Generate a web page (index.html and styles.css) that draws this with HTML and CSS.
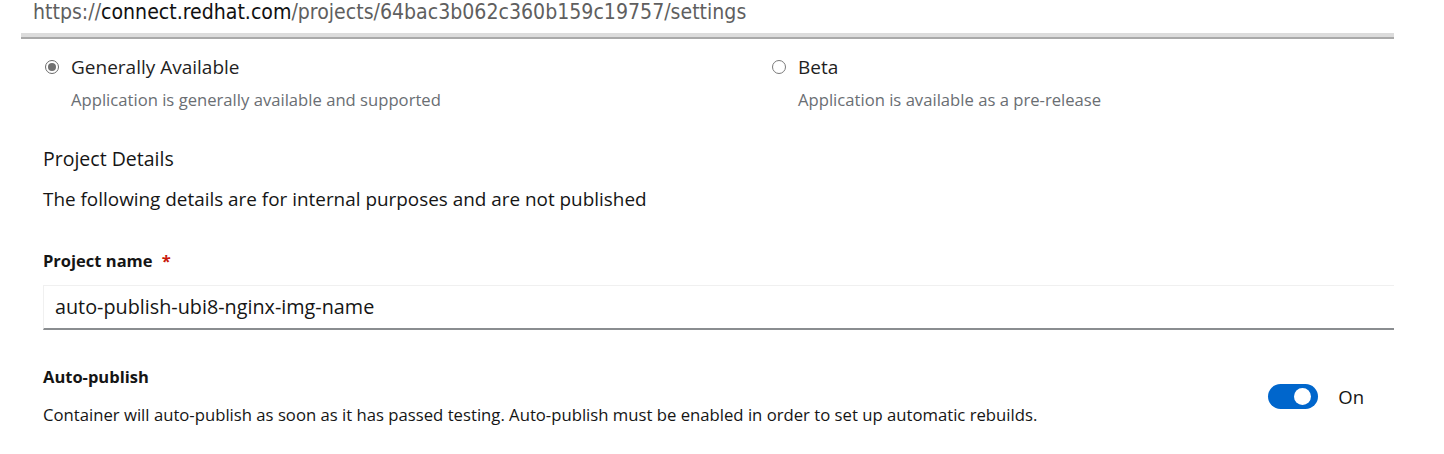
FILE: index.html
```html
<!DOCTYPE html>
<html>
<head>
<meta charset="utf-8">
<link rel="stylesheet" href="styles.css">
</head>
<body>
<div class="urlbar"><span class="dim">https://</span><span class="host">connect.redhat.com</span><span class="dim">/projects/64bac3b062c360b159c19757/settings</span></div>
<div class="sep"></div>
<main class="content">
  <div class="radios">
    <div class="radio-item">
      <div class="radio-row"><span class="radio checked"></span><span class="radio-label">Generally Available</span></div>
      <div class="radio-desc">Application is generally available and supported</div>
    </div>
    <div class="radio-item">
      <div class="radio-row"><span class="radio"></span><span class="radio-label">Beta</span></div>
      <div class="radio-desc">Application is available as a pre-release</div>
    </div>
  </div>
  <h2 class="section-title">Project Details</h2>
  <p class="section-intro">The following details are for internal purposes and are not published</p>
  <div class="field">
    <label class="field-label">Project name <span class="req">*</span></label>
    <div class="input">auto-publish-ubi8-nginx-img-name</div>
  </div>
  <div class="switch-row">
    <div class="switch-text">
      <div class="field-label">Auto-publish</div>
      <div class="switch-desc">Container will auto-publish as soon as it has passed testing. Auto-publish must be enabled in order to set up automatic rebuilds.</div>
    </div>
    <div class="switch">
      <span class="toggle"><span class="knob"></span></span>
      <span class="toggle-label">On</span>
    </div>
  </div>
</main>
</body>
</html>
```
FILE: styles.css
```css
html, body { margin: 0; padding: 0; background: #fff; }
body { font-family: "Open Sans", "Noto Sans", sans-serif; color: #151515; width: 1444px; height: 454px; overflow: hidden; }

.urlbar {
  font-family: "Liberation Sans Narrow", "DejaVu Sans Condensed", "Liberation Sans", sans-serif;
  font-stretch: condensed;
  font-size: 21.1px;
  line-height: 24px;
  padding-left: 33px;
  height: 25px;
  color: #5f5f5f;
}
.urlbar .host { color: #111; }

.sep {
  margin: 8px 0 0 21px;
  width: 1373px;
  height: 4px;
  background: #dcdcdc;
  border-bottom: 2px solid #a9a9a9;
}

.content { padding: 0 50px 0 43px; width: 1351px; box-sizing: content-box; }

.radios { display: grid; grid-template-columns: 727px 1fr; margin-top: 16px; }
.radio-row { display: flex; align-items: center; gap: 12px; height: 24px; }
.radio {
  width: 14px; height: 14px; border-radius: 50%;
  border: 1px solid #7a7a7a; box-sizing: border-box; margin-left: 2px;
  display: inline-flex; align-items: center; justify-content: center;
}
.radio.checked { border-color: #6a6a6a; }
.radio.checked::after { content: ""; width: 8px; height: 8px; border-radius: 50%; background: #6f6f6f; }
.radio-label { font-size: 19px; color: #1f1f1f; }
.radio-desc { font-size: 16.65px; color: #6a6e73; margin-left: 28px; margin-top: 10px; line-height: 22px; }

.section-title { font-size: 19.5px; font-weight: 500; margin: 36px 0 0; line-height: 24px; }
.section-intro { font-size: 18.9px; margin: 16px 0 0; line-height: 24px; }

.field { margin-top: 39px; }
.field-label { display: block; font-size: 16.5px; font-weight: 700; line-height: 22px; }
.req { color: #c9190b; margin-left: 5px; }
.input {
  margin-top: 13px;
  height: 45px; box-sizing: border-box;
  border: 1px solid #f0f0f0; border-bottom: 2px solid #8a8d90; border-right: none;
  padding: 0 11px; font-size: 19.8px; line-height: 42px; color: #151515;
}

.switch-row { display: flex; justify-content: space-between; align-items: center; margin-top: 36px; }
.switch-desc { font-size: 16.7px; margin-top: 16px; line-height: 22px; }
.switch { display: flex; align-items: center; gap: 20px; margin-right: 30px; margin-top: 0; }
.toggle { width: 50px; height: 25px; border-radius: 13px; background: #0066cc; display: flex; align-items: center; justify-content: flex-end; padding-right: 7px; box-sizing: border-box; }
.knob { width: 17px; height: 17px; border-radius: 50%; background: #fff; }
.toggle-label { font-size: 18.5px; color: #151515; }
```
